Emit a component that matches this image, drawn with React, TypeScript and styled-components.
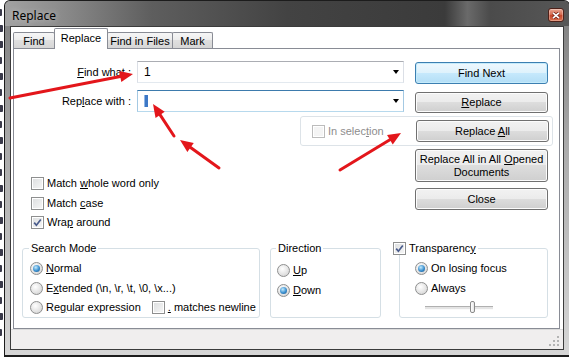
import styled, { createGlobalStyle } from "styled-components";

const GlobalStyle = createGlobalStyle`
  html, body {
    margin: 0;
    padding: 0;
    background: #fff;
    overflow: hidden;
  }
  body {
    font-family: "Liberation Sans", Arial, sans-serif;
    font-size: 11px;
    color: #000;
  }
  * {
    box-sizing: border-box;
  }
`;

const Page = styled.div`
  position: relative;
  display: flex;
  width: 569px;
  height: 362px;
  overflow: hidden;
  background: #fff;
`;

const Backdrop = styled.div`
  flex: none;
  width: 4px;
  display: flex;
  flex-direction: column;
  gap: 9px;
  padding-top: 9px;
  overflow: hidden;
`;

const GlyphBit = styled.span<{ $w: number }>`
  display: block;
  width: ${(p) => p.$w}px;
  height: 7px;
  background: #3a3a4a;
  border-radius: 0 1px 1px 0;
`;

const Window = styled.div`
  flex: none;
  width: 566px;
  height: 357px;
  display: flex;
  flex-direction: column;
  border: 1px solid #1c1c1c;
  border-bottom-width: 2px;
  border-radius: 6px 6px 0 0;
  overflow: hidden;
  background: linear-gradient(#7c7c7c, #a9a9a9 40%, #d6d6d6);
`;

const TitleBar = styled.div`
  flex: none;
  height: 25px;
  display: flex;
  align-items: center;
  justify-content: space-between;
  padding: 3px 5px 0 7px;
  background: linear-gradient(
    90deg,
    #a2a2a2 0%,
    #8e8e8e 9%,
    #5e5e5e 26%,
    #434343 50%,
    #3b3b3b 78%,
    #6a6a6a 82%,
    #4b4b4b 86%,
    #575757 100%
  );
  font-family: "Noto Sans", "Liberation Sans", sans-serif;
  font-size: 12px;
  text-shadow: 0 0 6px rgba(255, 255, 255, 0.55);
`;

const CloseButton = styled.div`
  width: 16px;
  height: 14px;
  display: flex;
  align-items: center;
  justify-content: center;
  border: 1px solid #4e2119;
  border-radius: 3px;
  background: linear-gradient(#eaa793, #d66d52 45%, #c4452a 55%, #d9714f);
  box-shadow: inset 0 0 0 1px rgba(255, 255, 255, 0.3);
`;

const Frame = styled.div`
  flex: 1;
  display: flex;
  padding: 0 5px 5px;
`;

const Client = styled.div`
  flex: 1;
  display: flex;
  flex-direction: column;
  border: 1px solid #3b3b3b;
  background: #fff;
`;

const TabArea = styled.div`
  flex: 1;
  display: flex;
  flex-direction: column;
  padding: 0 3px 0 2px;
`;

const TabStrip = styled.div`
  flex: none;
  height: 21px;
  display: flex;
  align-items: flex-end;
`;

const Tab = styled.div<{ $w: number; $active?: boolean }>`
  position: relative;
  width: ${(p) => p.$w}px;
  height: ${(p) => (p.$active ? 21 : 16)}px;
  margin-left: -1px;
  margin-bottom: ${(p) => (p.$active ? -1 : 0)}px;
  z-index: ${(p) => (p.$active ? 1 : 0)};
  display: flex;
  align-items: center;
  justify-content: center;
  padding-bottom: ${(p) => (p.$active ? 3 : 0)}px;
  border: 1px solid #898c95;
  border-bottom: none;
  border-radius: 2px 2px 0 0;
  background: ${(p) =>
    p.$active ? "#fff" : "linear-gradient(#f6f6f6, #ececec 50%, #dfdfdf 50%, #d6d6d6)"};
  font-size: 11px;
  white-space: nowrap;

  &:first-child {
    margin-left: 0;
  }
`;

const Panel = styled.div`
  flex: 1;
  display: flex;
  flex-direction: column;
  border: 1px solid #898c95;
  background: #fff;
`;

const TopGrid = styled.div`
  display: grid;
  grid-template-columns: 123px 267px 11px 133px;
  grid-template-rows: 29px 26px 33px;
  align-items: start;
  padding-top: 12px;
`;

const FieldLabel = styled.div`
  grid-column: 1;
  height: 22px;
  line-height: 22px;
  padding-right: 6px;
  text-align: right;
  white-space: nowrap;
`;

const Combo = styled.div<{ $focused?: boolean }>`
  grid-column: 2;
  height: 22px;
  display: flex;
  align-items: center;
  padding: 0 4px 0 6px;
  border: 1px solid ${(p) => (p.$focused ? "#a4c9e3" : "#dbdfe6")};
  border-top-color: ${(p) => (p.$focused ? "#3d7bad" : "#abadb3")};
  border-bottom-color: ${(p) => (p.$focused ? "#b7d9ed" : "#e3e9ef")};
  background: #fff;
  font-size: 12px;
`;

const ComboText = styled.span`
  flex: 1;
`;

const Caret = styled.span`
  display: block;
  width: 4px;
  height: 12px;
  margin-right: auto;
  background: #3d78c6;
  box-shadow: inset 1px 0 0 #8fb6e6;
`;

const DropArrow = styled.span`
  width: 0;
  height: 0;
  border-left: 3.5px solid transparent;
  border-right: 3.5px solid transparent;
  border-top: 4px solid #000;
`;

const Button = styled.div<{ $h?: number; $mt?: number; $default?: boolean }>`
  grid-column: 4;
  width: 133px;
  height: ${(p) => p.$h ?? 22}px;
  margin-top: ${(p) => p.$mt ?? 0}px;
  display: flex;
  align-items: center;
  justify-content: center;
  text-align: center;
  line-height: 13px;
  border: 1px solid ${(p) => (p.$default ? "#3c7fb1" : "#707070")};
  border-radius: 3px;
  background: ${(p) =>
    p.$default
      ? "linear-gradient(#eef8fe, #def2fc 50%, #c6e9fc 50%, #b3def6)"
      : "linear-gradient(#f2f2f2, #ebebeb 50%, #dddddd 50%, #cfcfcf)"};
  box-shadow: inset 0 0 0 1px ${(p) => (p.$default ? "#c5ebfb" : "#fcfcfc")};
`;

const SelectionBox = styled.div`
  grid-column: 2 / 5;
  justify-self: end;
  width: 253px;
  height: 30px;
  margin-right: -5px;
  display: flex;
  align-items: center;
  justify-content: space-between;
  padding: 0 3px 0 11px;
  border: 1px solid #dde3e8;
  border-radius: 3px;

  ${Button} {
    grid-column: auto;
  }
`;

const MiddleRow = styled.div`
  display: flex;
  padding-right: 11px;
`;

const CheckList = styled.div`
  display: flex;
  flex-direction: column;
  gap: 6.5px;
  padding: 28px 0 0 17px;
`;

const ButtonStack = styled.div`
  margin-left: auto;
  display: flex;
  flex-direction: column;
  gap: 6px;
`;

const Option = styled.div<{ $disabled?: boolean; $ml?: number }>`
  display: flex;
  align-items: center;
  gap: 3px;
  height: 13px;
  line-height: 13px;
  margin-left: ${(p) => p.$ml ?? 0}px;
  white-space: nowrap;
  color: ${(p) => (p.$disabled ? "#8d8d8d" : "#000")};
`;

const Box = styled.span<{ $disabled?: boolean }>`
  flex: none;
  width: 13px;
  height: 13px;
  display: flex;
  align-items: center;
  justify-content: center;
  border: 1px solid ${(p) => (p.$disabled ? "#bcbcbc" : "#8e8f8f")};
  background: ${(p) =>
    p.$disabled ? "#f4f4f4" : "linear-gradient(135deg, #dcdedf, #f7f7f7)"};
  box-shadow: inset 0 0 0 1px #fff;
`;

const Round = styled.span<{ $on?: boolean }>`
  flex: none;
  width: 13px;
  height: 13px;
  display: flex;
  align-items: center;
  justify-content: center;
  border: 1px solid #8e8f8f;
  border-radius: 50%;
  background: radial-gradient(circle at 40% 35%, #ffffff, #e2e2e2 60%, #c9c9c9);

  &::after {
    content: "";
    display: ${(p) => (p.$on ? "block" : "none")};
    width: 7px;
    height: 7px;
    border-radius: 50%;
    background: radial-gradient(circle at 40% 35%, #c4ebfd, #3a8fcf 55%, #1a4e7f);
  }
`;

const Key = styled.span`
  text-decoration: underline;
  text-underline-offset: 1px;
`;

const GroupRow = styled.div`
  display: flex;
  margin-top: 12px;
  padding-left: 8px;
`;

const Group = styled.fieldset<{ $w: number; $ml?: number; $pt?: number; $pl?: number }>`
  flex: none;
  width: ${(p) => p.$w}px;
  height: 77px;
  min-width: 0;
  margin: 0 0 0 ${(p) => p.$ml ?? 0}px;
  padding: ${(p) => p.$pt ?? 7}px 6px 0 ${(p) => p.$pl ?? 7}px;
  display: flex;
  flex-direction: column;
  gap: 6.5px;
  border: 1px solid #d5dfe5;
  border-radius: 3px;
`;

const Legend = styled.legend<{ $ml?: number }>`
  display: flex;
  align-items: center;
  gap: 3px;
  height: 14px;
  line-height: 14px;
  margin-left: ${(p) => p.$ml ?? -1}px;
  padding: 0 2px;
`;

const SliderTrack = styled.div`
  position: relative;
  width: 68px;
  height: 12px;
  margin: 0 0 0 10px;

  &::before {
    content: "";
    position: absolute;
    left: 0;
    right: 0;
    top: 5px;
    height: 2px;
    border-top: 1px solid #b0b0b0;
    border-bottom: 1px solid #fafafa;
    background: #e4e4e4;
  }
`;

const SliderThumb = styled.span`
  position: absolute;
  top: 0;
  width: 5px;
  height: 12px;
  border: 1px solid #8a8a8a;
  border-radius: 2px;
  background: linear-gradient(90deg, #fff, #e6e6e6);
`;

const StatusBar = styled.div`
  flex: none;
  height: 20px;
  display: flex;
  align-items: flex-end;
  justify-content: flex-end;
  padding: 0 3px 2px 0;
  border-top: 1px solid #dadada;
  background: #f0eeee;
`;

const Overlay = styled.svg`
  position: absolute;
  left: 0;
  top: 0;
  pointer-events: none;
`;

const Check = ({
  label,
  checked,
  disabled,
  ml,
}: {
  label: React.ReactNode;
  checked?: boolean;
  disabled?: boolean;
  ml?: number;
}) => (
  <Option $disabled={disabled} $ml={ml}>
    <Box $disabled={disabled}>
      {checked && (
        <svg width="9" height="9" viewBox="0 0 9 9">
          <path d="M1.2 4.6 L3.4 7.2 L7.8 1.4" fill="none" stroke="#4a5c8c" strokeWidth="1.7" />
        </svg>
      )}
    </Box>
    <span>{label}</span>
  </Option>
);

const Radio = ({ label, on }: { label: React.ReactNode; on?: boolean }) => (
  <Option>
    <Round $on={on} />
    <span>{label}</span>
  </Option>
);

const Slider = ({ value }: { value: number }) => (
  <SliderTrack>
    <SliderThumb style={{ left: `${value * 63}px` }} />
  </SliderTrack>
);

const arrows: [number, number, number, number][] = [
  [10, 98, 133, 74],
  [174, 136, 153, 104],
  [219, 168, 180, 140],
  [340, 170, 401, 133],
];

const headOf = (x1: number, y1: number, x2: number, y2: number) => {
  const a = Math.atan2(y2 - y1, x2 - x1);
  const len = 13;
  const half = 5.5;
  const bx = x2 - len * Math.cos(a);
  const by = y2 - len * Math.sin(a);
  const px = -Math.sin(a) * half;
  const py = Math.cos(a) * half;
  return {
    base: [bx, by],
    points: `${x2},${y2} ${bx + px},${by + py} ${bx - px},${by - py}`,
  };
};

const backdropBits = [2, 3, 3, 2, 3, 2, 3, 2, 3, 2, 2, 3, 2, 3, 2, 3, 2, 3, 2, 3, 2];

export default function App() {
  return (
    <>
      <GlobalStyle />
      <Page>
        <Backdrop>
          {backdropBits.map((w, i) => (
            <GlyphBit key={i} $w={w} />
          ))}
        </Backdrop>
        <Window>
          <TitleBar>
            <span>Replace</span>
            <CloseButton>
              <svg width="8" height="7" viewBox="0 0 8 7">
                <path d="M1 0.8 L7 6.2 M7 0.8 L1 6.2" stroke="#6a1e12" strokeWidth="3" />
                <path d="M1 0.8 L7 6.2 M7 0.8 L1 6.2" stroke="#fff" strokeWidth="1.7" />
              </svg>
            </CloseButton>
          </TitleBar>
          <Frame>
            <Client>
              <TabArea>
                <TabStrip>
                  <Tab $w={42}>Find</Tab>
                  <Tab $w={54} $active>
                    Replace
                  </Tab>
                  <Tab $w={66}>Find in Files</Tab>
                  <Tab $w={41}>Mark</Tab>
                </TabStrip>
                <Panel>
                  <TopGrid>
                    <FieldLabel>
                      <Key>F</Key>ind what :
                    </FieldLabel>
                    <Combo>
                      <ComboText>1</ComboText>
                      <DropArrow />
                    </Combo>
                    <Button $default $mt={1}>
                      Find Next
                    </Button>

                    <FieldLabel>
                      Rep<Key>l</Key>ace with :
                    </FieldLabel>
                    <Combo $focused>
                      <Caret />
                      <DropArrow />
                    </Combo>
                    <Button $mt={2} $h={21}>
                      <span>
                        <Key>R</Key>eplace
                      </span>
                    </Button>

                    <SelectionBox>
                      <Check
                        disabled
                        label={
                          <>
                            In selec<Key>t</Key>ion
                          </>
                        }
                      />
                      <Button>
                        <span>
                          Replace <Key>A</Key>ll
                        </span>
                      </Button>
                    </SelectionBox>
                  </TopGrid>

                  <MiddleRow>
                    <CheckList>
                      <Check
                        label={
                          <>
                            Match <Key>w</Key>hole word only
                          </>
                        }
                      />
                      <Check
                        label={
                          <>
                            Match <Key>c</Key>ase
                          </>
                        }
                      />
                      <Check
                        checked
                        label={
                          <>
                            Wra<Key>p</Key> around
                          </>
                        }
                      />
                    </CheckList>
                    <ButtonStack>
                      <Button $h={33}>
                        <span>
                          Replace All in All <Key>O</Key>pened
                          <br />
                          Documents
                        </span>
                      </Button>
                      <Button>Close</Button>
                    </ButtonStack>
                  </MiddleRow>

                  <GroupRow>
                    <Group $w={238}>
                      <Legend>Search Mode</Legend>
                      <Radio
                        on
                        label={
                          <>
                            <Key>N</Key>ormal
                          </>
                        }
                      />
                      <Radio
                        label={
                          <>
                            E<Key>x</Key>tended (\n, \r, \t, \0, \x...)
                          </>
                        }
                      />
                      <Option>
                        <Round />
                        <span>
                          Re<Key>g</Key>ular expression
                        </span>
                        <Check
                          ml={8}
                          label={
                            <>
                              <Key>.</Key> matches newline
                            </>
                          }
                        />
                      </Option>
                    </Group>

                    <Group $w={111} $ml={10} $pt={9} $pl={6}>
                      <Legend>Direction</Legend>
                      <Radio
                        label={
                          <>
                            <Key>U</Key>p
                          </>
                        }
                      />
                      <Radio
                        on
                        label={
                          <>
                            <Key>D</Key>own
                          </>
                        }
                      />
                    </Group>

                    <Group $w={149} $ml={18} $pl={15}>
                      <Legend $ml={-24}>
                        <Check
                          checked
                          label={
                            <>
                              Transparenc<Key>y</Key>
                            </>
                          }
                        />
                      </Legend>
                      <Radio on label="On losing focus" />
                      <Radio label="Always" />
                      <Slider value={0.72} />
                    </Group>
                  </GroupRow>
                </Panel>
              </TabArea>
              <StatusBar>
                <svg width="11" height="11" viewBox="0 0 11 11">
                  {[
                    [8, 0],
                    [8, 4],
                    [4, 4],
                    [8, 8],
                    [4, 8],
                    [0, 8],
                  ].map(([x, y], i) => (
                    <rect key={i} x={x} y={y} width="2" height="2" fill="#b4b4b4" />
                  ))}
                </svg>
              </StatusBar>
            </Client>
          </Frame>
        </Window>
        <Overlay width="569" height="362" viewBox="0 0 569 362">
          {arrows.map(([x1, y1, x2, y2], i) => {
            const h = headOf(x1, y1, x2, y2);
            return (
              <g key={i}>
                <line
                  x1={x1}
                  y1={y1}
                  x2={h.base[0]}
                  y2={h.base[1]}
                  stroke="#e3161b"
                  strokeWidth="3"
                  strokeLinecap="round"
                />
                <polygon points={h.points} fill="#e3161b" />
              </g>
            );
          })}
        </Overlay>
      </Page>
    </>
  );
}
